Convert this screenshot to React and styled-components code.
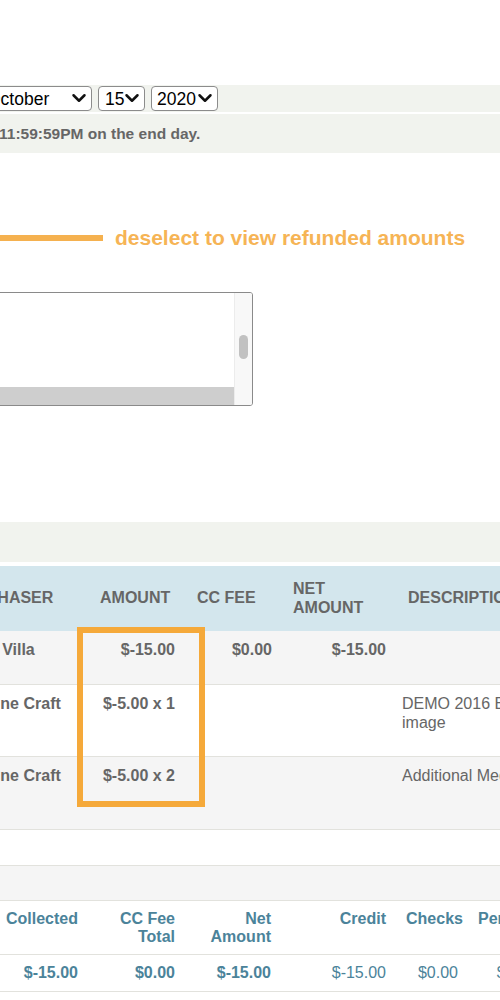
import React from "react";
import styled, { createGlobalStyle } from "styled-components";
import { ChevronDown } from "lucide-react";

const GlobalStyle = createGlobalStyle`
    body {
        margin: 0;
        background: #fff;
        overflow: hidden;
        font-family: "Liberation Sans", Arial, sans-serif;
    }
`;

const months = [
    'January', 'February', 'March', 'April', 'May', 'June',
    'July', 'August', 'September', 'October', 'November', 'December'
];

const days = Array.from({ length: 31 }, (_, i) => String(i + 1));
const years = ['2018', '2019', '2020', '2021'];

const DateSelect = ({ width, offset, pad, value, options }) => (
    <SelectWrap $w={width} $ml={offset}>
        <Select $pl={pad} defaultValue={value}>
            {options.map((o) => <option key={o}>{o}</option>)}
        </Select>
        <Chevron size={22} strokeWidth={2.7} />
    </SelectWrap>
);

const App = () => {
    return (
        <Page>
            <GlobalStyle />
            <Band $h={27}>
                <DateSelect width={111} offset={-19} pad={5} value="October" options={months} />
                <DateSelect width={47} pad={6} value="15" options={days} />
                <DateSelect width={67} pad={5} value="2020" options={years} />
            </Band>
            <Band $h={39} $mt={2}>
                <Note>11:59:59PM on the end day.</Note>
            </Band>

            <Annotation>
                <Pointer />
                <Hint>deselect to view refunded amounts</Hint>
            </Annotation>

            <ListBox>
                <Options>
                    <Option $selected />
                </Options>
                <ScrollTrack>
                    <ScrollThumb />
                </ScrollTrack>
            </ListBox>

            <Band $h={40} $mt={116} />

            <TableArea>
                <MainTable>
                    <colgroup>
                        <col style={{ width: 145 }} />
                        <col style={{ width: 97 }} />
                        <col style={{ width: 95 }} />
                        <col style={{ width: 114 }} />
                        <col style={{ width: 220 }} />
                    </colgroup>
                    <thead>
                        <tr>
                            <Th $pl={7}>PURCHASER</Th>
                            <Th $pl={10}>AMOUNT</Th>
                            <Th $pl={10}>CC FEE</Th>
                            <Th $pl={11}>NET AMOUNT</Th>
                            <Th $pl={12}>DESCRIPTION</Th>
                        </tr>
                    </thead>
                    <tbody>
                        <Row $h={53} $shade>
                            <Td>Marty Villa</Td>
                            <Td $right $pr={12}>$-15.00</Td>
                            <Td $right>$0.00</Td>
                            <Td $right>$-15.00</Td>
                            <Td $plain $pl={6}></Td>
                        </Row>
                        <Row $h={72}>
                            <Td>Machine Craft</Td>
                            <Td $right $pr={12}>$-5.00 x 1</Td>
                            <Td $right></Td>
                            <Td $right></Td>
                            <Td $plain $pl={6}>DEMO 2016 Event Banner<br />image</Td>
                        </Row>
                        <Row $h={73} $shade>
                            <Td>Machine Craft</Td>
                            <Td $right $pr={12}>$-5.00 x 2</Td>
                            <Td $right></Td>
                            <Td $right></Td>
                            <Td $plain $pl={6}>Additional Media</Td>
                        </Row>
                        <Row $h={36}>
                            <Td /><Td /><Td /><Td /><Td />
                        </Row>
                        <Row $h={35} $shade>
                            <Td /><Td /><Td /><Td /><Td />
                        </Row>
                    </tbody>
                </MainTable>
                <Highlight />
            </TableArea>

            <SummaryTable>
                <colgroup>
                    <col style={{ width: 150 }} />
                    <col style={{ width: 97 }} />
                    <col style={{ width: 96 }} />
                    <col style={{ width: 115 }} />
                    <col style={{ width: 72 }} />
                    <col style={{ width: 93 }} />
                </colgroup>
                <thead>
                    <tr>
                        <SumTh>Collected</SumTh>
                        <SumTh>CC Fee Total</SumTh>
                        <SumTh>Net Amount</SumTh>
                        <SumTh>Credit</SumTh>
                        <SumTh>Checks</SumTh>
                        <SumTh $nowrap>Per Event</SumTh>
                    </tr>
                </thead>
                <tbody>
                    <tr>
                        <SumTd $bold>$-15.00</SumTd>
                        <SumTd $bold>$0.00</SumTd>
                        <SumTd $bold>$-15.00</SumTd>
                        <SumTd>$-15.00</SumTd>
                        <SumTd>$0.00</SumTd>
                        <SumTd>$-15.00</SumTd>
                    </tr>
                </tbody>
            </SummaryTable>
        </Page>
    );
};

const Page = styled.div`
    width: 500px;
    padding-top: 85px;
    display: flex;
    flex-direction: column;
`;

const Band = styled.div`
    height: ${(p) => p.$h}px;
    margin-top: ${(p) => p.$mt || 0}px;
    background: #f1f3ee;
    display: flex;
    align-items: center;
    gap: 6px;
`;

const SelectWrap = styled.div`
    position: relative;
    flex-shrink: 0;
    width: ${(p) => p.$w}px;
    height: 25px;
    margin-left: ${(p) => p.$ml || 0}px;
`;

const Select = styled.select`
    appearance: none;
    -webkit-appearance: none;
    width: 100%;
    height: 100%;
    box-sizing: border-box;
    border: 1px solid #8c8c8c;
    border-radius: 4px;
    background: #fff;
    color: #000;
    font-family: "Liberation Sans", Arial, sans-serif;
    font-size: 17.5px;
    padding: 0 0 0 ${(p) => p.$pl}px;
    outline: none;
`;

const Chevron = styled(ChevronDown)`
    position: absolute;
    right: 2px;
    top: 1px;
    color: #111;
    pointer-events: none;
`;

const Note = styled.span`
    font-size: 15.5px;
    font-weight: bold;
    color: #666;
    margin-left: -1px;
`;

const Annotation = styled.div`
    margin-top: 70px;
    height: 30px;
    display: flex;
    align-items: center;
    gap: 12px;
`;

const Pointer = styled.div`
    width: 103px;
    height: 6px;
    background: #f5b14f;
    flex-shrink: 0;
`;

const Hint = styled.span`
    font-size: 21px;
    font-weight: bold;
    color: #f6b455;
    white-space: nowrap;
`;

const ListBox = styled.div`
    margin-top: 39px;
    margin-left: -20px;
    width: 273px;
    height: 114px;
    box-sizing: border-box;
    border: 1px solid #8a8a8a;
    border-radius: 3px;
    display: flex;
    overflow: hidden;
`;

const Options = styled.div`
    flex: 1;
    display: flex;
    flex-direction: column;
    justify-content: flex-end;
`;

const Option = styled.div`
    height: 18px;
    background: ${(p) => (p.$selected ? '#cecece' : 'transparent')};
`;

const ScrollTrack = styled.div`
    width: 18px;
    background: #f8f8f8;
    border-left: 1px solid #ececec;
    display: flex;
    justify-content: center;
    padding-top: 42px;
    box-sizing: border-box;
`;

const ScrollThumb = styled.div`
    width: 9px;
    height: 24px;
    border-radius: 5px;
    background: #c1c1c1;
`;

const TableArea = styled.div`
    position: relative;
    margin-top: 4px;
`;

const MainTable = styled.table`
    margin-left: -55px;
    border-collapse: collapse;
    table-layout: fixed;
    width: 671px;
    font-size: 16px;
    color: #666;
`;

const Th = styled.th`
    height: 65px;
    padding: 0 6px 0 ${(p) => p.$pl}px;
    background: #d3e6ed;
    text-align: left;
    vertical-align: middle;
    font-weight: bold;
    line-height: 18.5px;
    white-space: normal;
`;

const Row = styled.tr`
    background: ${(p) => (p.$shade ? '#f5f5f5' : '#fff')};
    border-bottom: 1px solid #e2e2dd;

    td {
        height: ${(p) => p.$h}px;
    }
`;

const Td = styled.td`
    box-sizing: border-box;
    padding: 9px ${(p) => p.$pr || 10}px 0 ${(p) => p.$pl || 10}px;
    vertical-align: top;
    line-height: 19px;
    text-align: ${(p) => (p.$right ? 'right' : 'left')};
    font-weight: ${(p) => (p.$plain ? 'normal' : 'bold')};
    white-space: nowrap;
`;

const Highlight = styled.div`
    position: absolute;
    left: 77px;
    top: 61px;
    width: 128px;
    height: 180px;
    box-sizing: border-box;
    border: 6px solid #f5a93a;
    pointer-events: none;
`;

const SummaryTable = styled.table`
    margin-left: -62px;
    border-collapse: collapse;
    table-layout: fixed;
    width: 623px;
    font-size: 16px;
    color: #4b839a;
`;

const SumTh = styled.th`
    height: 54px;
    box-sizing: border-box;
    padding: 9px 10px 0 10px;
    text-align: right;
    vertical-align: top;
    font-weight: bold;
    line-height: 18.5px;
    white-space: ${(p) => (p.$nowrap ? 'nowrap' : 'normal')};
    border-bottom: 1px solid #e2e2dd;
`;

const SumTd = styled.td`
    height: 36px;
    padding: 0 10px;
    text-align: right;
    vertical-align: middle;
    font-weight: ${(p) => (p.$bold ? 'bold' : 'normal')};
    border-bottom: 1px solid #e2e2dd;
    white-space: nowrap;
`;

export default App;
